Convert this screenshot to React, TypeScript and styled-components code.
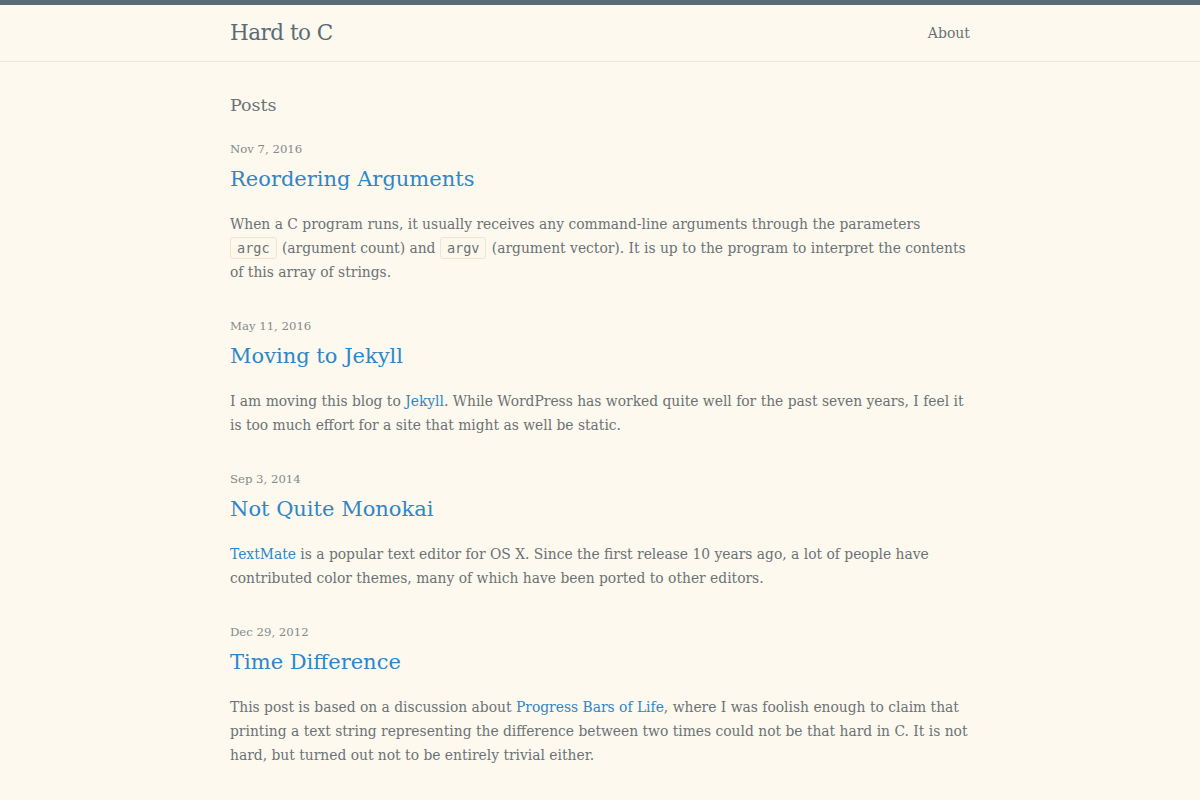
import styled, { createGlobalStyle } from 'styled-components';

const GlobalStyle = createGlobalStyle`
  html, body {
    margin: 0;
    padding: 0;
    background: #fdf9ee;
  }
  body {
    font-family: 'DejaVu Serif', serif;
    color: #6b7276;
  }
`;

const Header = styled.header`
  border-top: 5px solid #5a6b75;
  border-bottom: 1px solid #ebe7dc;
  height: 56px;
`;

const Wrapper = styled.div`
  width: 740px;
  margin: 0 auto;
`;

const HeaderInner = styled(Wrapper)`
  display: flex;
  align-items: center;
  justify-content: space-between;
  height: 100%;
`;

const SiteTitle = styled.a`
  font-size: 21.5px;
  line-height: 1;
  margin-top: -1px;
  color: #5a6b75;
  text-decoration: none;
  letter-spacing: -0.5px;
`;

const NavLink = styled.a`
  font-size: 14px;
  color: #6b7276;
  text-decoration: none;
`;

const Main = styled(Wrapper)`
  padding-top: 28px;
  padding-bottom: 40px;
`;

const PageHeading = styled.h2`
  margin: 0 0 19px;
  font-size: 17.5px;
  line-height: 30px;
  font-weight: normal;
  color: #6b7276;
`;

const PostList = styled.ul`
  list-style: none;
  margin: 0;
  padding: 0;
  display: flex;
  flex-direction: column;
  gap: 32px;
`;

const PostMeta = styled.span`
  display: block;
  font-size: 11.7px;
  line-height: 21px;
  color: #858a8c;
`;

const PostTitle = styled.h3`
  margin: 2.5px 0 17.5px;
  font-size: 21px;
  line-height: 32px;
  font-weight: normal;

  a {
    color: #2e86c8;
    text-decoration: none;
  }
`;

const Excerpt = styled.p`
  margin: 0;
  font-size: 13.85px;
  line-height: 24px;
`;

const Link = styled.a`
  color: #2e86c8;
  text-decoration: none;
`;

const Code = styled.code`
  font-family: 'DejaVu Sans Mono', 'Liberation Mono', monospace;
  font-size: 13.5px;
  line-height: 1;
  margin: 0 1px 0 0;
  padding: 2px 6px;
  background: #fcf8ec;
  border: 1px solid #ebe5d5;
  border-radius: 3px;
  color: #6b7276;
`;

type Post = {
  date: string;
  title: string;
  excerpt: React.ReactNode;
};

const posts: Post[] = [
  {
    date: 'Nov 7, 2016',
    title: 'Reordering Arguments',
    excerpt: (
      <>
        When a C program runs, it usually receives any command-line arguments through the
        parameters <Code>argc</Code> (argument count) and <Code>argv</Code> (argument vector).
        It is up to the program to interpret the contents of this array of strings.
      </>
    ),
  },
  {
    date: 'May 11, 2016',
    title: 'Moving to Jekyll',
    excerpt: (
      <>
        I am moving this blog to <Link href="#">Jekyll</Link>. While WordPress has worked quite
        well for the past seven years, I feel it is too much effort for a site that might as
        well be static.
      </>
    ),
  },
  {
    date: 'Sep 3, 2014',
    title: 'Not Quite Monokai',
    excerpt: (
      <>
        <Link href="#">TextMate</Link> is a popular text editor for OS X. Since the first
        release 10 years ago, a lot of people have contributed color themes, many of which have
        been ported to other editors.
      </>
    ),
  },
  {
    date: 'Dec 29, 2012',
    title: 'Time Difference',
    excerpt: (
      <>
        This post is based on a discussion about <Link href="#">Progress Bars of Life</Link>,
        where I was foolish enough to claim that printing a text string representing the
        difference between two times could not be that hard in C. It is not hard, but turned
        out not to be entirely trivial either.
      </>
    ),
  },
];

export default function App() {
  return (
    <>
      <GlobalStyle />
      <Header>
        <HeaderInner>
          <SiteTitle href="#">Hard to C</SiteTitle>
          <NavLink href="#">About</NavLink>
        </HeaderInner>
      </Header>
      <Main>
        <PageHeading>Posts</PageHeading>
        <PostList>
          {posts.map((post) => (
            <li key={post.title}>
              <PostMeta>{post.date}</PostMeta>
              <PostTitle>
                <a href="#">{post.title}</a>
              </PostTitle>
              <Excerpt>{post.excerpt}</Excerpt>
            </li>
          ))}
        </PostList>
      </Main>
    </>
  );
}
